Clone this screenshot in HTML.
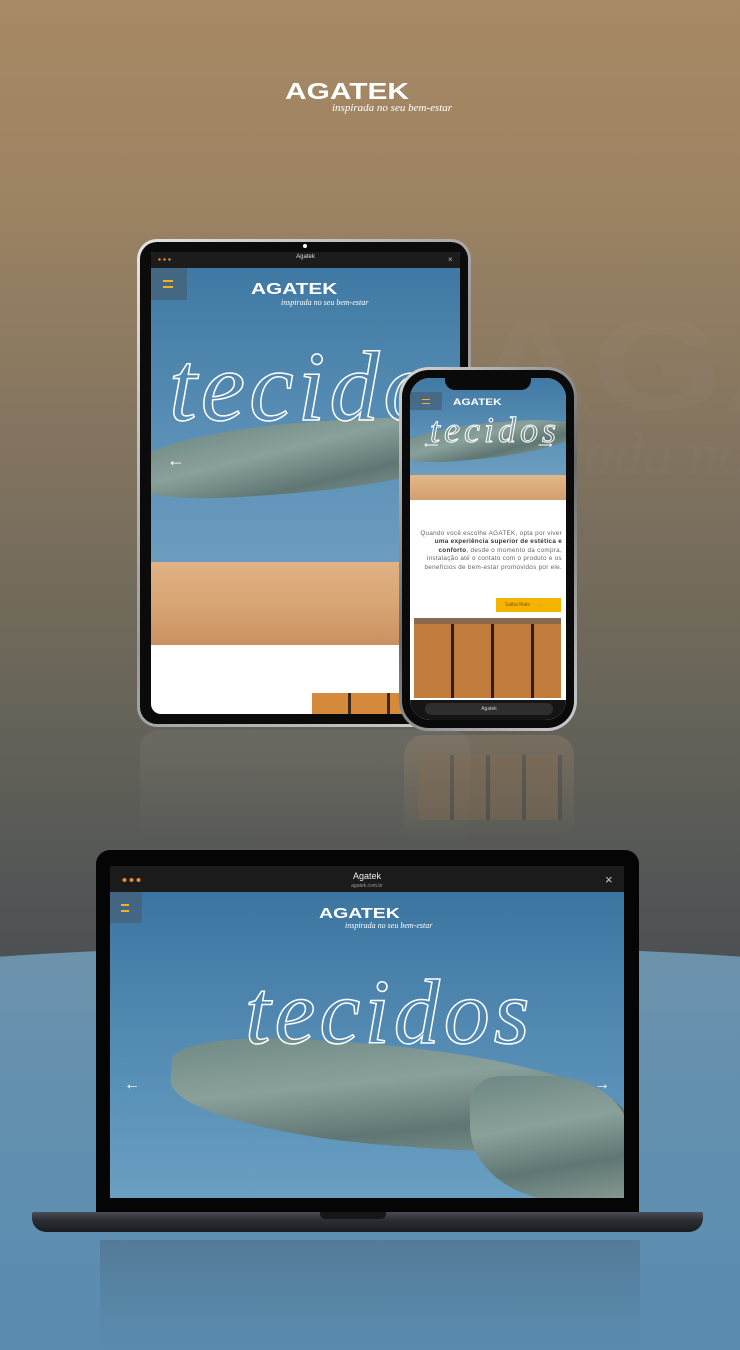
<!DOCTYPE html>
<html style="overflow:hidden;width:740px;height:1350px"><head><meta charset="utf-8">
<style>
*{margin:0;padding:0;box-sizing:border-box}
html,body{width:740px;height:1350px;overflow:hidden}
body{position:relative;font-family:"Liberation Sans",sans-serif;
background:linear-gradient(180deg,#a88a64 0%,#9c8363 15%,#7f725f 35%,#6a6659 50%,#545756 65%,#474c50 75%,#43494d 100%)}
#wrap{position:absolute;left:0;top:0;width:740px;height:1350px;overflow:hidden}
.abs{position:absolute}
.logo{font-family:"Liberation Sans",sans-serif;font-weight:bold;color:#fff;letter-spacing:0;transform:scaleX(1.3);transform-origin:left top;line-height:1}
.tag{font-family:"Liberation Serif",serif;font-style:italic;color:#fff;white-space:nowrap}
.sky{background:linear-gradient(180deg,#3f79a3 0%,#5a8fb6 45%,#79a7c6 100%)}
.cloth{background:linear-gradient(170deg,#6d8784,#8aa09a 40%,#5f7674 70%,#889b94);}
.script{font-family:"Liberation Serif",serif;font-style:italic;color:transparent;-webkit-text-stroke:1.5px #fff;white-space:nowrap;line-height:1;letter-spacing:4px}
</style></head><body><div id="wrap">
<!-- lower blue floor -->
<div class="abs" style="left:-300px;top:945px;width:1340px;height:405px;border-radius:670px 670px 0 0/70px 70px 0 0;background:linear-gradient(180deg,#6e93ab 0%,#6791ae 20%,#5f8eb0 60%,#5a8cb0 100%)"></div>
<!-- watermark -->
<div class="abs" style="left:470px;top:290px;font:bold 130px 'Liberation Sans',sans-serif;color:rgba(255,255,255,0.02);transform:scaleX(1.3);transform-origin:left;white-space:nowrap;width:270px;overflow:hidden">AGA</div>
<div class="abs tag" style="left:560px;top:420px;font-size:60px;color:rgba(255,255,255,0.02);width:180px;overflow:hidden">rada no</div>

<!-- top logo -->
<div class="abs logo" style="left:285px;top:80px;font-size:23px">AGATEK</div>
<div class="abs tag" style="left:332px;top:102px;font-size:11px">inspirada no seu bem-estar</div>

<!-- reflections -->
<div class="abs" style="left:140px;top:730px;width:330px;height:115px;border-radius:18px;background:linear-gradient(180deg,rgba(120,120,115,0.35),rgba(80,85,85,0))"></div>
<div class="abs" style="left:404px;top:735px;width:170px;height:105px;border-radius:20px;background:linear-gradient(180deg,rgba(150,130,105,0.4),rgba(80,85,85,0))"></div>
<div class="abs" style="left:418px;top:755px;width:144px;height:65px;opacity:.3;background:repeating-linear-gradient(90deg,#8a6a4a 0 32px,#333 32px 36px)"></div>
<div class="abs" style="left:100px;top:1240px;width:540px;height:110px;background:linear-gradient(180deg,rgba(60,80,100,0.3),rgba(90,140,176,0))"></div>

<!-- TABLET -->
<div class="abs" style="left:137px;top:239px;width:334px;height:488px;border-radius:20px;background:linear-gradient(135deg,#e4e4e4,#9a9a9a 50%,#d0d0d0);padding:3px">
 <div style="width:100%;height:100%;border-radius:17px;background:#0b0b0b"></div>
</div>
<div class="abs" style="left:303px;top:244px;width:4px;height:4px;border-radius:50%;background:#fff"></div>
<div class="abs" style="left:151px;top:252px;width:309px;height:462px;overflow:hidden;border-radius:2px 2px 10px 10px;background:#fff">
 <div class="abs" style="left:0;top:0;width:309px;height:16px;background:#1c1c1c"></div>
 <div class="abs" style="left:6px;top:6px;width:14px;height:3px;background:radial-gradient(circle,#e58a2a 1px,transparent 1.5px) 0 0/5px 3px"></div>
 <div class="abs" style="left:0;top:2px;width:309px;text-align:center;color:#ddd;font-size:6px">Agatek</div>
 <div class="abs" style="left:297px;top:3px;color:#bbb;font-size:8px">×</div>
 <div class="abs sky" style="left:0;top:16px;width:309px;height:377px"></div>
 <div class="abs" style="left:0;top:310px;width:309px;height:83px;background:linear-gradient(180deg,#e0b284,#d9a574 50%,#c9915f)"></div>
 <div class="abs cloth" style="left:-20px;top:170px;width:360px;height:70px;border-radius:50% 40% 60% 30%;transform:rotate(-4deg)"></div>
 <div class="abs" style="left:0;top:16px;width:36px;height:32px;background:rgba(70,90,110,.6)"></div>
 <div class="abs" style="left:12px;top:28px;width:10px;height:8px;border-top:2px solid #f2b21a;border-bottom:2px solid #f2b21a"></div>
 <div class="abs logo" style="left:100px;top:30px;font-size:16px">AGATEK</div>
 <div class="abs tag" style="left:130px;top:46px;font-size:8px">inspirada no seu bem-estar</div>
 <div class="abs script" style="left:18px;top:85px;font-size:100px">tecidos</div>
 <div class="abs" style="left:16px;top:198px;color:#fff;font-size:18px">←</div>
 <div class="abs" style="left:161px;top:441px;width:150px;height:21px;background:repeating-linear-gradient(90deg,#d58a3c 0 36px,#3a2a1c 36px 39px)"></div>
</div>

<!-- PHONE -->
<div class="abs" style="left:399px;top:367px;width:178px;height:364px;border-radius:30px;background:linear-gradient(135deg,#d8d8d8,#6a6a6a 50%,#cfcfcf);padding:3px">
 <div style="width:100%;height:100%;border-radius:27px;background:#0a0a0a"></div>
</div>
<div class="abs" style="left:410px;top:378px;width:156px;height:342px;overflow:hidden;border-radius:20px;background:#fff">
 <div class="abs sky" style="left:0;top:0;width:156px;height:122px"></div>
 <div class="abs" style="left:0;top:97px;width:156px;height:25px;background:linear-gradient(180deg,#e4b88a,#d39f6e)"></div>
 <div class="abs cloth" style="left:-10px;top:45px;width:180px;height:35px;border-radius:50% 40% 60% 30%;transform:rotate(-5deg)"></div>
 <div class="abs" style="left:0;top:14px;width:32px;height:18px;background:rgba(70,90,110,.6)"></div>
 <div class="abs" style="left:12px;top:21px;width:8px;height:5px;border-top:1.5px solid #f2b21a;border-bottom:1.5px solid #f2b21a"></div>
 <div class="abs logo" style="left:43px;top:20px;font-size:9px">AGATEK</div>
 <div class="abs script" style="left:20px;top:34px;font-size:36px;-webkit-text-stroke:1px #fff">tecidos</div>
 <div class="abs" style="left:14px;top:62px;color:#fff;font-size:10px">⟵</div>
 <div class="abs" style="left:128px;top:62px;color:#fff;font-size:10px">⟶</div>
 <div class="abs" style="left:8px;top:152px;width:144px;text-align:right;font-size:6.3px;line-height:8.4px;color:#666;letter-spacing:.3px">Quando você escolhe AGATEK, opta por viver <b style="color:#333">uma experiência superior de estética e conforto</b>, desde o momento da compra, instalação até o contato com o produto e os benefícios de bem-estar promovidos por ele.</div>
 <div class="abs" style="left:86px;top:220px;width:65px;height:14px;background:#f5b400;font-size:5px;color:#7a5a00;padding:4px 0 0 9px">Saiba Mais &nbsp;&nbsp;&nbsp;&nbsp; →</div>
 <div class="abs" style="left:4px;top:240px;width:147px;height:80px;background:repeating-linear-gradient(90deg,#c17b3c 0 37px,#2b1d12 37px 40px);"></div>
 <div class="abs" style="left:4px;top:240px;width:147px;height:6px;background:#8a6a4e"></div>
 <div class="abs" style="left:0;top:322px;width:156px;height:20px;background:#151515"></div>
 <div class="abs" style="left:15px;top:325px;width:128px;height:12px;border-radius:6px;background:#2e2e2e;color:#ccc;font-size:5px;text-align:center;padding-top:3px">Agatek</div>
</div>
<div class="abs" style="left:445px;top:377px;width:86px;height:13px;border-radius:0 0 10px 10px;background:#0a0a0a"></div>

<!-- LAPTOP -->
<div class="abs" style="left:96px;top:850px;width:543px;height:364px;border-radius:14px 14px 0 0;background:#050505"></div>
<div class="abs" style="left:110px;top:866px;width:514px;height:332px;overflow:hidden;background:#1b1b1b">
 <div class="abs" style="left:11px;top:12px;width:22px;height:4px;background:radial-gradient(circle,#e68a2a 1.8px,transparent 2.2px) 0 0/7px 4px"></div>
 <div class="abs" style="left:0;top:5px;width:514px;text-align:center;color:#eee;font-size:9px">Agatek</div>
 <div class="abs" style="left:0;top:17px;width:514px;text-align:center;color:#999;font-size:5px">agatek.com.br</div>
 <div class="abs" style="left:495px;top:6px;color:#ccc;font-size:13px">×</div>
 <div class="abs sky" style="left:0;top:26px;width:514px;height:306px;background:linear-gradient(180deg,#3b75a0 0%,#4f87b0 40%,#6a9fc2 100%)"></div>
 <div class="abs cloth" style="left:60px;top:180px;width:460px;height:100px;border-radius:30% 60% 40% 50%;transform:rotate(4deg)"></div>
 <div class="abs cloth" style="left:360px;top:210px;width:160px;height:125px;border-radius:20% 50% 10% 60%;"></div>
 <div class="abs" style="left:0;top:26px;width:32px;height:31px;background:rgba(70,90,110,.6)"></div>
 <div class="abs" style="left:11px;top:38px;width:8px;height:8px;border-top:2px solid #f2b21a;border-bottom:2px solid #f2b21a"></div>
 <div class="abs logo" style="left:209px;top:40px;font-size:15px">AGATEK</div>
 <div class="abs tag" style="left:235px;top:55px;font-size:8px">inspirada no seu bem-estar</div>
 <div class="abs script" style="left:135px;top:100px;font-size:92px">tecidos</div>
 <div class="abs" style="left:14px;top:210px;color:#fff;font-size:16px">←</div>
 <div class="abs" style="left:484px;top:210px;color:#fff;font-size:16px">→</div>
</div>
<div class="abs" style="left:32px;top:1212px;width:671px;height:20px;border-radius:2px 2px 14px 14px;background:linear-gradient(180deg,#4a4d55 0%,#2c2e33 40%,#1b1c20 100%)"></div>
<div class="abs" style="left:320px;top:1212px;width:66px;height:7px;border-radius:0 0 5px 5px;background:#15161a"></div>
</div></body></html>
